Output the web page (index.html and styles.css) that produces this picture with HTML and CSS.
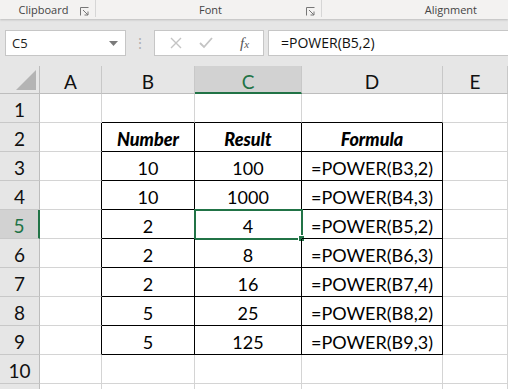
FILE: index.html
```html
<!DOCTYPE html>
<html lang="en">
<head>
    <meta charset="UTF-8">
    <title>POWER</title>
    <link rel="stylesheet" href="styles.css">
</head>
<body>
<div class="ribbon">
    <div class="grupo g1">
        <span class="etiqueta">Clipboard</span>
        <svg class="lanzador" width="9" height="9" viewBox="0 0 9 9"><path d="M0.5 0.5h8M0.5 0.5v8M3 3l5 5M8 4.5v3.5h-3.5" stroke="#777" fill="none"/></svg>
    </div>
    <div class="grupo g2">
        <span class="etiqueta">Font</span>
        <svg class="lanzador" width="9" height="9" viewBox="0 0 9 9"><path d="M0.5 0.5h8M0.5 0.5v8M3 3l5 5M8 4.5v3.5h-3.5" stroke="#777" fill="none"/></svg>
    </div>
    <div class="grupo g3">
        <span class="etiqueta">Alignment</span>
    </div>
</div>
<div class="barra">
    <div class="nombre">
        <span>C5</span>
        <svg width="9" height="5" viewBox="0 0 9 5"><path d="M0 0h9l-4.5 5z" fill="#7a7a7a"/></svg>
    </div>
    <div class="puntos">&#8942;</div>
    <div class="botones">
        <svg width="14" height="14" viewBox="0 0 14 14"><path d="M2 2l10 10M12 2l-10 10" stroke="#c4c4c4" stroke-width="1.4"/></svg>
        <svg width="16" height="14" viewBox="0 0 16 14"><path d="M2 7l4 4l8-9" stroke="#c4c4c4" stroke-width="1.8" fill="none"/></svg>
        <span class="fx">f<small>x</small></span>
    </div>
    <div class="formula">=POWER(B5,2)</div>
</div>
<div class="hoja">
    <div class="esquina"><span class="triangulo"></span></div>
    <div class="cab">A</div>
    <div class="cab">B</div>
    <div class="cab sel">C</div>
    <div class="cab">D</div>
    <div class="cab">E</div>

    <div class="num">1</div>
    <div class="c"></div><div class="c abajo"></div><div class="c abajo"></div><div class="c abajo"></div><div class="c"></div>

    <div class="num">2</div>
    <div class="c izq"></div><div class="c t b">Number</div><div class="c t b">Result</div><div class="c t b">Formula</div><div class="c"></div>

    <div class="num">3</div>
    <div class="c izq"></div><div class="c t">10</div><div class="c t">100</div><div class="c t">=POWER(B3,2)</div><div class="c"></div>

    <div class="num">4</div>
    <div class="c izq"></div><div class="c t">10</div><div class="c t">1000</div><div class="c t">=POWER(B4,3)</div><div class="c"></div>

    <div class="num sel">5</div>
    <div class="c izq"></div><div class="c t">2</div><div class="c t activa">4<span class="asa"></span></div><div class="c t">=POWER(B5,2)</div><div class="c"></div>

    <div class="num">6</div>
    <div class="c izq"></div><div class="c t">2</div><div class="c t">8</div><div class="c t">=POWER(B6,3)</div><div class="c"></div>

    <div class="num">7</div>
    <div class="c izq"></div><div class="c t">2</div><div class="c t">16</div><div class="c t">=POWER(B7,4)</div><div class="c"></div>

    <div class="num">8</div>
    <div class="c izq"></div><div class="c t">5</div><div class="c t">25</div><div class="c t">=POWER(B8,2)</div><div class="c"></div>

    <div class="num">9</div>
    <div class="c izq"></div><div class="c t">5</div><div class="c t">125</div><div class="c t">=POWER(B9,3)</div><div class="c"></div>

    <div class="num">10</div>
    <div class="c"></div><div class="c"></div><div class="c"></div><div class="c"></div><div class="c"></div>

    <div class="num resto"></div>
    <div class="c resto"></div><div class="c resto"></div><div class="c resto"></div><div class="c resto"></div><div class="c resto"></div>
</div>
</body>
</html>
```

FILE: styles.css
```css
body {
    margin: 0;
    font-family: Lato, "Open Sans", sans-serif;
    background-color: #e6e6e6;
    overflow: hidden;
}
.ribbon {
    height: 19px;
    display: flex;
    background-color: #f3f2f1;
    box-shadow: 0 1px 2px rgba(0,0,0,0.18);
    position: relative;
}
.grupo {
    display: flex;
    align-items: center;
    justify-content: center;
    position: relative;
    border-right: 1px solid #d6d6d6;
    height: 15px;
    padding-top: 2px;
}
.g1 { width: 95px; }
.g2 { width: 225px; }
.g3 { flex: 1; border-right: none; justify-content: flex-end; padding-right: 31px; }
.g1 .etiqueta { margin-right: 8px; }
.g2 .etiqueta { margin-left: 4px; }
.etiqueta {
    font-family: "Open Sans", sans-serif;
    font-size: 11px;
    color: #444;
}
.lanzador {
    position: absolute;
    right: 6px;
    top: 7px;
}
.barra {
    height: 26px;
    margin-top: 11px;
    display: flex;
    align-items: stretch;
}
.nombre {
    width: 121px;
    margin-left: 5px;
    background: #fff;
    border: 1px solid #c6c6c6;
    display: flex;
    align-items: center;
    justify-content: space-between;
    padding: 0 7px 0 6px;
    font-family: "Open Sans", sans-serif;
    font-size: 13px;
    color: #222;
    box-sizing: border-box;
}
.puntos {
    width: 28px;
    text-align: center;
    color: #b0b0b0;
    font-size: 14px;
    line-height: 26px;
}
.botones {
    width: 110px;
    background: #fff;
    border: 1px solid #c6c6c6;
    box-sizing: border-box;
    display: flex;
    align-items: center;
    justify-content: space-around;
    padding: 0 6px;
}
.fx {
    font-family: "Liberation Serif", serif;
    font-style: italic;
    font-size: 15px;
    color: #555;
    margin-left: 10px;
}
.fx small { font-size: 11px; }
.formula {
    flex: 1;
    margin-left: 4px;
    background: #fff;
    border: 1px solid #c6c6c6;
    border-right: none;
    padding-left: 12px;
    font-family: "Open Sans", sans-serif;
    font-size: 14px;
    line-height: 24px;
    color: #111;
}
.hoja {
    margin-top: 10px;
    display: grid;
    grid-template-columns: 40px 62px 93px 107px 141px 1fr;
    grid-template-rows: 28px repeat(10, 29px) 6px;
    background-color: #fff;
}
.esquina, .cab, .num {
    background-color: #e6e6e6;
    box-sizing: border-box;
    display: flex;
    align-items: center;
    justify-content: center;
    font-size: 19px;
    color: #111;
}
.esquina {
    border-right: 1px solid #bdbdbd;
    border-bottom: 1px solid #bdbdbd;
    position: relative;
}
.triangulo {
    position: absolute;
    right: 3px;
    bottom: 3px;
    width: 0;
    height: 0;
    border-left: 20px solid transparent;
    border-bottom: 20px solid #b4b4b4;
}
.cab {
    border-right: 1px solid #c8c8c8;
    border-bottom: 1px solid #bdbdbd;
    padding-top: 4px;
}
.num {
    border-right: 1px solid #bdbdbd;
    border-bottom: 1px solid #c8c8c8;
    padding-top: 3px;
}
.cab.sel {
    background-color: #d2d2d2;
    color: #217346;
    border-bottom: 2px solid #217346;
}
.num.sel {
    background-color: #d2d2d2;
    color: #217346;
    border-right: 2px solid #217346;
}
.c {
    box-sizing: border-box;
    border-right: 1px solid #d4d4d4;
    border-bottom: 1px solid #d4d4d4;
    display: flex;
    align-items: center;
    justify-content: center;
    font-size: 18px;
    color: #000;
    padding-top: 3px;
    position: relative;
}
.resto {
    border-bottom: none;
    padding-top: 0;
}
.c.t {
    border-right-color: #000;
    border-bottom-color: #000;
}
.c.abajo { border-bottom-color: #000; }
.c.izq { border-right-color: #000; }
.c.b {
    font-weight: 900;
    font-style: italic;
}
.activa {
    outline: 2px solid #217346;
    outline-offset: -1px;
}
.asa {
    position: absolute;
    right: -4px;
    bottom: -4px;
    width: 5px;
    height: 5px;
    background-color: #217346;
    border: 1px solid #fff;
}
```
